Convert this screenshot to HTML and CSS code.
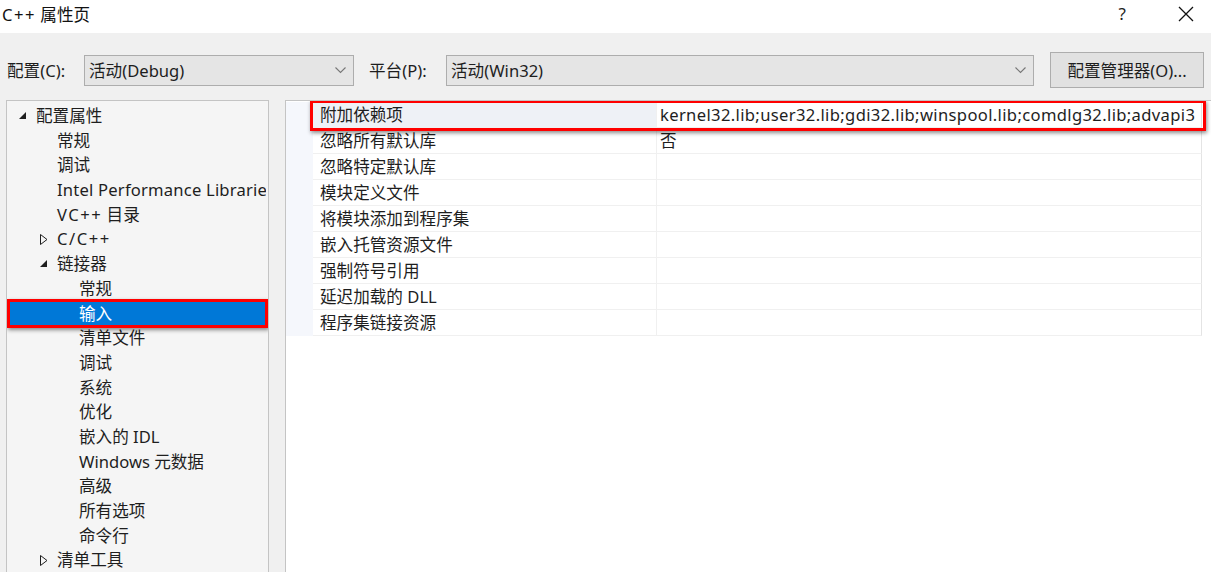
FILE: index.html
```html
<!DOCTYPE html>
<html lang="zh-CN">
<head>
<meta charset="utf-8">
<title>C++ 属性页</title>
<link rel="stylesheet" href="styles.css">
</head>
<body>
<div class="window">
  <div class="titlebar">
    <span class="title"><span class="pp">C++</span> 属性页</span>
    <span class="tb-help">?</span>
    <span class="tb-close"><svg width="16" height="16" viewBox="0 0 16 16"><path d="M1 1 L15 15 M15 1 L1 15" stroke="#111" stroke-width="1.3" fill="none"/></svg></span>
  </div>
  <div class="content">
    <div class="config-row">
      <span class="label label-config">配置(C):</span>
      <div class="combo combo-config"><span>活动(Debug)</span><svg class="chev" width="11" height="7" viewBox="0 0 11 7"><path d="M0.5 0.5 L5.5 5.5 L10.5 0.5" stroke="#777" stroke-width="1.1" fill="none"/></svg></div>
      <span class="label label-platform">平台(P):</span>
      <div class="combo combo-platform"><span>活动(Win32)</span><svg class="chev" width="11" height="7" viewBox="0 0 11 7"><path d="M0.5 0.5 L5.5 5.5 L10.5 0.5" stroke="#777" stroke-width="1.1" fill="none"/></svg></div>
      <button class="btn">配置管理器(O)...</button>
    </div>
    <div class="panes">
      <div class="tree">
        <div class="node l1"><svg class="tri" width="8" height="8" viewBox="0 0 8 8"><polygon points="7,0 7,7 0,7" fill="#1e1e1e"/></svg>配置属性</div>
        <div class="node l2">常规</div>
        <div class="node l2">调试</div>
        <div class="node l2 latin">Intel Performance Librarie</div>
        <div class="node l2"><span class="pp">VC++</span> 目录</div>
        <div class="node l2 has"><svg class="tri" width="8" height="11" viewBox="0 0 8 11"><polygon points="0.5,0.5 7,5.5 0.5,10.5" fill="none" stroke="#1e1e1e" stroke-width="1"/></svg><span class="pp">C/C++</span></div>
        <div class="node l2 has"><svg class="tri" width="8" height="8" viewBox="0 0 8 8"><polygon points="7,0 7,7 0,7" fill="#1e1e1e"/></svg>链接器</div>
        <div class="node l3">常规</div>
        <div class="node l3 selected">输入</div>
        <div class="node l3">清单文件</div>
        <div class="node l3">调试</div>
        <div class="node l3">系统</div>
        <div class="node l3">优化</div>
        <div class="node l3">嵌入的 IDL</div>
        <div class="node l3">Windows 元数据</div>
        <div class="node l3">高级</div>
        <div class="node l3">所有选项</div>
        <div class="node l3">命令行</div>
        <div class="node l2 has"><svg class="tri" width="8" height="11" viewBox="0 0 8 11"><polygon points="0.5,0.5 7,5.5 0.5,10.5" fill="none" stroke="#1e1e1e" stroke-width="1"/></svg>清单工具</div>
        <div class="mark mark-tree"></div>
      </div>
      <div class="grid">
        <div class="rows">
          <div class="row active"><div class="gutter"></div><div class="name">附加依赖项</div><div class="value">kernel32.lib;user32.lib;gdi32.lib;winspool.lib;comdlg32.lib;advapi3</div></div>
          <div class="row"><div class="gutter"></div><div class="name">忽略所有默认库</div><div class="value">否</div></div>
          <div class="row"><div class="gutter"></div><div class="name">忽略特定默认库</div><div class="value"></div></div>
          <div class="row"><div class="gutter"></div><div class="name">模块定义文件</div><div class="value"></div></div>
          <div class="row"><div class="gutter"></div><div class="name">将模块添加到程序集</div><div class="value"></div></div>
          <div class="row"><div class="gutter"></div><div class="name">嵌入托管资源文件</div><div class="value"></div></div>
          <div class="row"><div class="gutter"></div><div class="name">强制符号引用</div><div class="value"></div></div>
          <div class="row"><div class="gutter"></div><div class="name">延迟加载的 DLL</div><div class="value"></div></div>
          <div class="row"><div class="gutter"></div><div class="name">程序集链接资源</div><div class="value"></div></div>
        </div>
        <div class="mark mark-grid"></div>
      </div>
    </div>
  </div>
</div>
</body>
</html>
```
FILE: styles.css
```css
* { box-sizing: border-box; }
html, body { margin: 0; padding: 0; }
body {
  width: 1211px;
  height: 572px;
  overflow: hidden;
  font-family: "Segoe UI", "Noto Sans", "Noto Sans CJK SC", sans-serif;
  font-size: 16.6px;
  color: #1e1e1e;
  background: #f0f0f0;
}
.window { width: 1211px; height: 572px; display: flex; flex-direction: column; }
.titlebar {
  height: 33px;
  background: #ffffff;
  display: flex;
  align-items: center;
  padding-left: 2px;
  flex: none;
}
.title { font-size: 16.6px; color: #111; margin-top: -6px; }
.pp { letter-spacing: 1.5px; }
.tb-help { margin-left: auto; font-size: 17px; margin-top: -6px; margin-right: 52px; }
.tb-close { margin-right: 17px; margin-top: -6px; display: flex; }
.content { flex: 1; display: flex; flex-direction: column; min-height: 0; }
.config-row {
  display: flex;
  align-items: center;
  height: 36px;
  margin-top: 19px;
  flex: none;
}
.label-config { margin-left: 7px; width: 77px; }
.label-platform { margin-left: 15px; width: 77px; }
.combo {
  height: 31px;
  background: #e5e5e5;
  border: 1px solid #adadad;
  display: flex;
  align-items: center;
  padding-left: 4px;
  padding-right: 7px;
}
.combo span { flex: 1; }
.combo-config { width: 270px; }
.combo-platform { width: 588px; }
.chev { flex: none; }
.btn {
  margin-left: 16px;
  width: 154px;
  height: 36px;
  background: #e1e1e1;
  border: 1px solid #adadad;
  font: inherit;
  color: #1e1e1e;
  padding: 0;
}
.panes {
  flex: 1;
  display: flex;
  margin-top: 12px;
  min-height: 0;
}
.tree {
  position: relative;
  width: 263px;
  margin-left: 6px;
  background: #f5f5f5;
  border: 1px solid #c4c4c4;
  border-bottom: none;
  padding-top: 3px;
  padding-left: 2px;
  padding-right: 2px;
  overflow: hidden;
}
.node {
  height: 24.7px;
  line-height: 24.7px;
  white-space: nowrap;
  position: relative;
  overflow: hidden;
}
.node.latin { letter-spacing: 0.2px; }
.node.l1 { padding-left: 27px; }
.node.l2 { padding-left: 48px; }
.node.l3 { padding-left: 70px; }
.tri { position: absolute; top: 8px; }
.l1 .tri { left: 10px; }
.l2 .tri { left: 31px; }
.l2 .tri[height="11"] { top: 7px; }
.node.selected { background: #0078d7; color: #fff; }
.mark {
  position: absolute;
  border: 3px solid #f00;
  box-shadow: 1px 2px 4px rgba(0,0,0,0.45);
  pointer-events: none;
}
.mark-tree { left: 0px; top: 198px; width: 261px; height: 29px; }
.grid {
  position: relative;
  flex: 1;
  margin-left: 16px;
  background: #fff;
  border: 1px solid #c4c4c4;
  border-right: none;
  border-bottom: none;
  padding-top: 1px;
  overflow: hidden;
}
.rows { display: flex; flex-direction: column; width: 916px; }
.row { display: flex; height: 26px; }
.gutter { width: 27px; flex: none; background: #f5f7fc; }
.name {
  width: 344px;
  flex: none;
  padding-left: 7px;
  line-height: 25px;
  border-bottom: 1px solid #f0f0f0;
  border-right: 1px solid #f0f0f0;
  white-space: nowrap;
}
.value {
  flex: 1;
  padding-left: 3px;
  line-height: 25px;
  border-bottom: 1px solid #f0f0f0;
  border-right: 1px solid #e4e4e4;
  white-space: nowrap;
  overflow: hidden;
  min-width: 0;
  letter-spacing: 0.35px;
}
.row.active .name { background: #eef1f6; }
.mark-grid { left: 24px; top: -1px; width: 896px; height: 31px; }
```
